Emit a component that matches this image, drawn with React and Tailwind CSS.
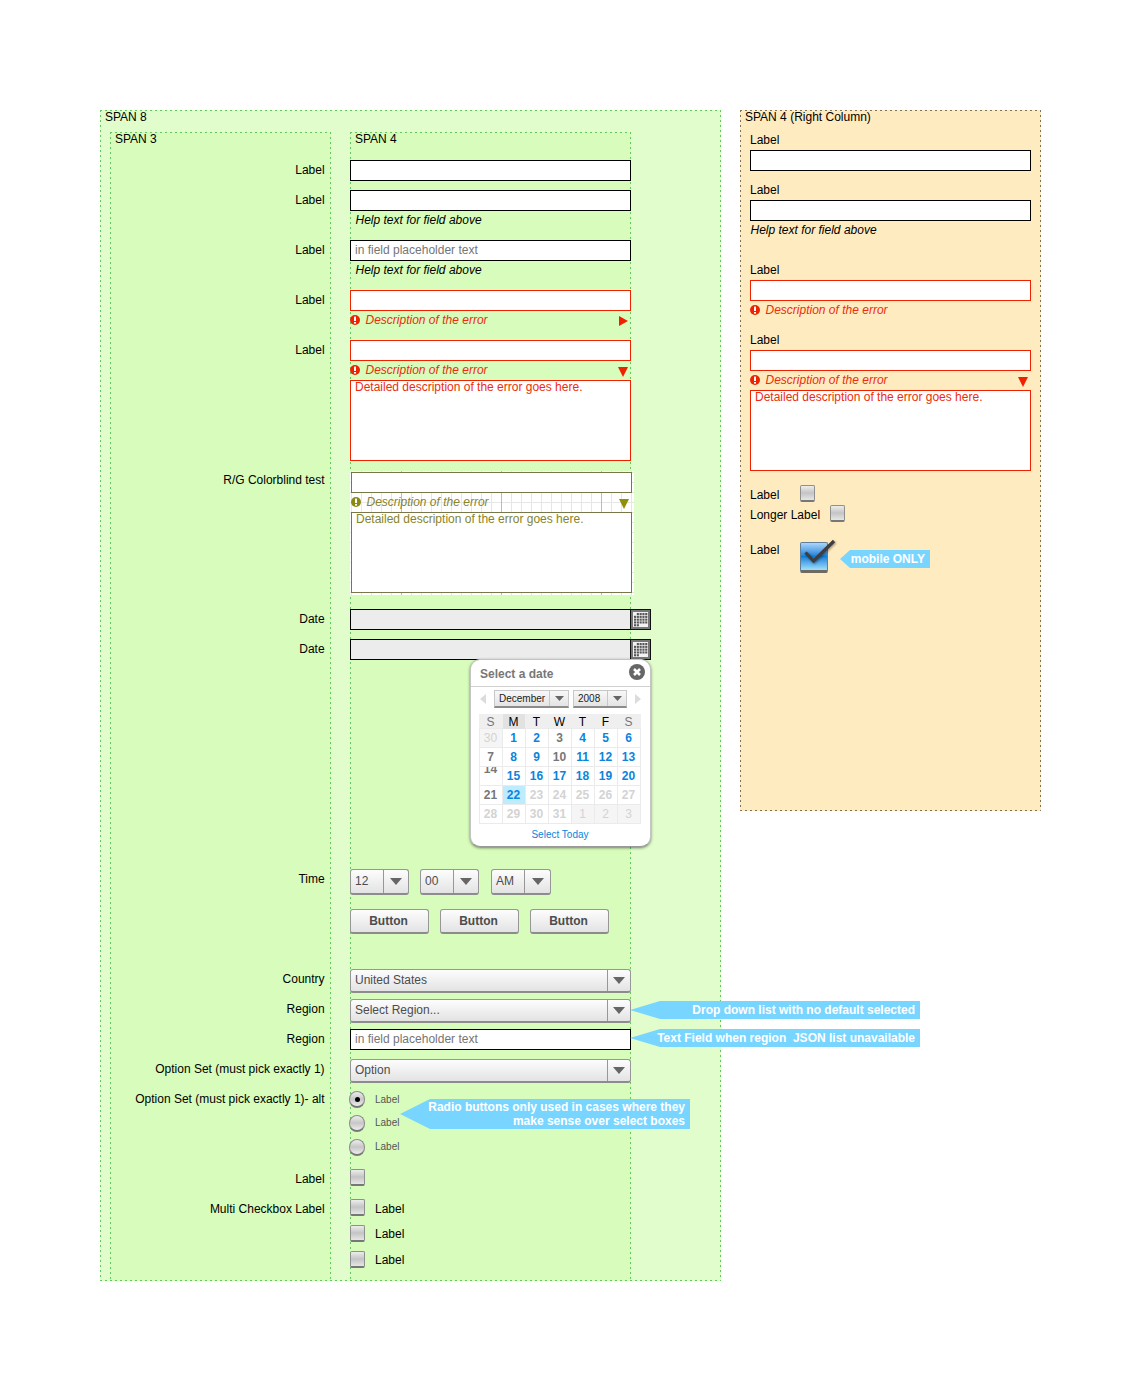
import React from "react";

const GREEN_DASH =
  "[background-image:repeating-linear-gradient(90deg,#63c863_0_2px,transparent_2px_5px),repeating-linear-gradient(90deg,#63c863_0_2px,transparent_2px_5px),repeating-linear-gradient(180deg,#63c863_0_2px,transparent_2px_5px),repeating-linear-gradient(180deg,#63c863_0_2px,transparent_2px_5px)] [background-size:100%_1px,100%_1px,1px_100%,1px_100%] [background-position:0_0,0_100%,0_0,100%_0] bg-no-repeat";
const GRAY_DASH =
  "[background-image:repeating-linear-gradient(90deg,#7d7363_0_2px,transparent_2px_5px),repeating-linear-gradient(90deg,#7d7363_0_2px,transparent_2px_5px),repeating-linear-gradient(180deg,#7d7363_0_2px,transparent_2px_5px),repeating-linear-gradient(180deg,#7d7363_0_2px,transparent_2px_5px)] [background-size:100%_1px,100%_1px,1px_100%,1px_100%] [background-position:0_0,0_100%,0_0,100%_0] bg-no-repeat";

const labels = [
  ["Label", "h-[30px]"],
  ["Label", "h-[50px]"],
  ["Label", "h-[50px]"],
  ["Label", "h-[50px]"],
  ["Label", "h-[130px]"],
  ["R/G Colorblind test", "h-[139px]"],
  ["Date", "h-[30px]"],
  ["Date", "h-[230px]"],
  ["Time", "h-[100px]"],
  ["Country", "h-[30px]"],
  ["Region", "h-[30px]"],
  ["Region", "h-[30px]"],
  ["Option Set (must pick exactly 1)", "h-[30px]"],
  ["Option Set (must pick exactly 1)- alt", "h-[80px]"],
  ["Label", "h-[30px]"],
  ["Multi Checkbox Label", "h-[30px]"],
];

function Field({ color = "border-black", children }) {
  return (
    <div className={`h-[21px] w-[281px] border bg-white pl-1 leading-[18px] text-[#757575] ${color}`}>
      {children}
    </div>
  );
}

function Triangle({ dir = "down", className = "fill-[#ee2200]" }) {
  return (
    <svg width="10" height="10" viewBox="0 0 10 10" className={className}>
      {dir === "down" ? <path d="M0 0H10L5 10Z" /> : <path d="M1 0L10 5L1 10Z" />}
    </svg>
  );
}

function ErrorLine({ arrow, olive }) {
  return (
    <div
      className={`flex h-[20px] w-[281px] items-center pr-[3px] italic ${olive ? "text-[#85852a]" : "text-[#ee2b0c]"}`}
    >
      <svg width="10" height="10" viewBox="0 0 10 10" className={olive ? "fill-[#8b8a10]" : "fill-[#ee2200]"}>
        <circle cx="5" cy="5" r="5" />
        <rect x="4" y="1.6" width="2" height="4.4" fill="white" />
        <rect x="4" y="7" width="2" height="1.6" fill="white" />
      </svg>
      <span className="ml-[5.5px] grow leading-[20px]">Description of the error</span>
      {arrow && (
        <span className={arrow === "down" ? "mt-[4px]" : "mt-[2px]"}>
          <Triangle dir={arrow} className={olive ? "fill-[#8f8f08]" : "fill-[#ee2200]"} />
        </span>
      )}
    </div>
  );
}

function Detail({ className = "border-[#ee2200] text-[#ee2b0c]" }) {
  return (
    <div className={`h-[81px] w-[281px] border bg-white pl-1 leading-[12px] ${className}`}>
      Detailed description of the error goes here.
    </div>
  );
}

function Help({ className }) {
  return <div className={`leading-[20px] italic ${className}`}>Help text for field above</div>;
}

function CalendarIcon() {
  const cells = [];
  for (let r = 0; r < 5; r++)
    for (let c = 0; c < 5; c++) {
      if ((r === 0 && c < 1) || (r === 4 && c > 1)) continue;
      cells.push(<rect key={`${r}-${c}`} x={4 + c * 2.8} y={4 + r * 2.8} width="2.1" height="2.1" />);
    }
  return (
    <svg width="21" height="21" viewBox="0 0 21 21" className="-ml-px">
      <rect width="21" height="21" fill="#111" />
      <rect x="1" y="1" width="19" height="19" fill="#777" />
      <rect x="3" y="3" width="15" height="15" fill="#f2f2f2" />
      <g fill="#555">{cells}</g>
    </svg>
  );
}

function DateField() {
  return (
    <div className="flex w-[301px]">
      <div className="h-[21px] w-[281px] shrink-0 border border-black bg-[#ececec]" />
      <CalendarIcon />
    </div>
  );
}

const BEVEL =
  "border border-b-2 border-[#979797] border-b-[#8c8c8c] bg-linear-to-b from-[#fdfdfd] to-[#e3e3e3] text-[#4c4c4c]";

function Select({ children, className, arrow = "w-[25px]", text = "leading-[20px]" }) {
  return (
    <div className={`flex rounded-[3px] ${BEVEL} ${className}`}>
      <span className={`grow pl-1 ${text}`}>{children}</span>
      <span className={`flex items-center justify-center border-l border-[#979797] ${arrow}`}>
        <svg width="12" height="7" viewBox="0 0 12 7" className="fill-[#666]">
          <path d="M0 0H12L6 7Z" />
        </svg>
      </span>
    </div>
  );
}

function Button() {
  return (
    <div className={`h-[25px] w-[79px] rounded-[3px] pr-[2px] text-center font-bold leading-[22px] ${BEVEL}`}>
      Button
    </div>
  );
}

function Checkbox() {
  return (
    <div className="h-[17px] w-[15px] shrink-0 rounded-[2px] border border-b-2 border-[#8f8f8f] border-b-[#777] bg-linear-to-b from-[#ededed] via-[#c4c4c4] to-[#e6e6e6]" />
  );
}

function Radio({ on }) {
  return (
    <div className="-ml-px flex h-[17px] w-[16px] items-center justify-center rounded-full border border-b-2 border-[#8c8c8c] border-b-[#777] bg-linear-to-b from-[#eee] via-[#c6c6c6] to-[#eee]">
      {on && <div className="h-[5px] w-[5px] rounded-full bg-black" />}
    </div>
  );
}

function Callout({ className, children }) {
  return (
    <div
      className={`absolute z-10 bg-[#78d5ff] pr-[5px] text-right font-bold whitespace-pre text-white ${className}`}
    >
      {children}
    </div>
  );
}

const days = [
  ["30", "out"], ["1"], ["2"], ["3", "gray"], ["4"], ["5"], ["6"],
  ["7", "gray"], ["8"], ["9"], ["10", "gray"], ["11"], ["12"], ["13"],
  ["14", "clip"], ["15"], ["16"], ["17"], ["18"], ["19"], ["20"],
  ["21", "gray"], ["22", "today"], ["23", "off"], ["24", "off"], ["25", "off"], ["26", "off"], ["27", "off"],
  ["28", "off"], ["29", "off"], ["30", "off"], ["31", "off"], ["1", "out"], ["2", "out"], ["3", "out"],
];
const dayStyle = {
  link: "bg-white font-bold text-[#0a84dc]",
  gray: "bg-white font-bold text-[#777]",
  clip: "bg-white font-bold text-[#777]",
  today: "bg-[#bfebff] font-bold text-[#0a84dc]",
  off: "bg-white font-bold text-[#d3d3d3]",
  out: "bg-[#f5f5f5] text-[#d3d3d3]",
};

function MiniSelect({ children, className }) {
  return (
    <div
      className={`flex h-[18px] border border-b-2 border-[#c8c8c8] border-b-[#8c8c8c] bg-linear-to-b from-[#f8f8f8] to-[#e4e4e4] text-[10px] text-[#222] ${className}`}
    >
      <span className="grow pl-1 leading-[15px]">{children}</span>
      <span className="flex w-[19px] items-center justify-center border-l border-[#c8c8c8]">
        <svg width="9" height="5" viewBox="0 0 9 5" className="fill-[#666]">
          <path d="M0 0H9L4.5 5Z" />
        </svg>
      </span>
    </div>
  );
}

function DatePopup() {
  return (
    <div className="absolute top-[20px] left-[120px] z-10 h-[188px] w-[181px] rounded-[10px] border border-[#c4c4c4] border-b-[#999] bg-white shadow-[0_1px_3px_rgba(0,0,0,0.5)]">
      <div className="flex h-[27px] items-start justify-between border-b border-[#d0d0d0] pr-[5px] pl-[9px]">
        <span className="leading-[28px] font-bold text-[#777]">Select a date</span>
        <svg width="16" height="16" viewBox="0 0 16 16" className="mt-[4px]">
          <circle cx="8" cy="8" r="8" fill="#666" />
          <path d="M5 5L11 11M11 5L5 11" stroke="white" strokeWidth="2.6" />
        </svg>
      </div>
      <div className="flex h-[27px] items-center pl-[9px]">
        <svg width="6" height="10" viewBox="0 0 6 10" className="mb-[3px] fill-[#dcdcdc]">
          <path d="M6 0V10L0 5Z" />
        </svg>
        <MiniSelect className="mb-[3px] ml-[8px] w-[75px]">December</MiniSelect>
        <MiniSelect className="mb-[3px] ml-[4px] w-[54px]">2008</MiniSelect>
        <svg width="6" height="10" viewBox="0 0 6 10" className="mb-[3px] ml-[8px] fill-[#dcdcdc]">
          <path d="M0 0V10L6 5Z" />
        </svg>
      </div>
      <div className="ml-[8px] w-[162px] bg-[#ebebeb]">
        <div className="grid h-[14px] grid-cols-7 gap-px bg-[#efefef] px-px text-center leading-[16px]">
          {["S", "M", "T", "W", "T", "F", "S"].map((d, i) => (
            <span
              key={i}
              className={`pr-px ${i === 1 ? "bg-[#e2e2e2] text-black" : i % 6 === 0 ? "text-[#777]" : "text-black"}`}
            >
              {d}
            </span>
          ))}
        </div>
        <div className="grid grid-cols-7 gap-px p-px text-center">
          {days.map(([n, kind = "link"], i) => (
            <span key={i} className={`h-[18px] overflow-hidden pr-px leading-[18px] ${dayStyle[kind]}`}>
              <span className={kind === "clip" ? "-mt-[7px] block" : "block"}>{n}</span>
            </span>
          ))}
        </div>
      </div>
      <div className="pr-px text-center text-[10px] leading-[21px] text-[#0a84dc]">Select Today</div>
    </div>
  );
}

function ColorblindSample() {
  return (
    <div className="h-[124px] w-[284px] bg-white bg-[linear-gradient(90deg,#bbb_1px,transparent_1px),linear-gradient(90deg,#e6e6e6_1px,transparent_1px),linear-gradient(#e6e6e6_1px,transparent_1px)] [background-position:51px_0,1px_0,0_1px] [background-size:100px_100%,10px_100%,100%_10px] pt-px pl-px">
      <Field color="border-[#77774a]" />
      <div className="-mt-px h-[20px]">
        <ErrorLine arrow="down" olive />
      </div>
      <Detail className="border-[#77774a] text-[#85852a]" />
    </div>
  );
}

function MobileCheckbox() {
  return (
    <div className="relative h-[31px] w-[28px] rounded-[2px] border border-b-[3px] border-[#5f7f9c] border-b-[#6f6a60] bg-linear-to-b from-[#a9d6fa] via-[#0c7fd8] to-[#9fe0fb]">
      <svg width="36" height="28" viewBox="0 0 36 28" className="absolute -top-[4px] left-0 drop-shadow-[1px_1px_1px_rgba(0,0,0,0.4)]">
        <path d="M4.5 13.5L12.5 22L33 2" fill="none" stroke="#3e3e40" strokeWidth="3.2" />
      </svg>
    </div>
  );
}

export default function App() {
  return (
    <div className="flex h-[1380px] w-[1140px] gap-[19px] overflow-hidden bg-white pt-[110px] pl-[100px] font-['Liberation_Sans',Arial,sans-serif] text-[12px] leading-[14px] text-black">
      <section className={`h-[1171px] w-[621px] bg-[#e0fdcb] ${GREEN_DASH}`}>
        <h2 className="h-[22px] pl-[5px]">SPAN 8</h2>
        <div className="flex gap-[19px] pl-[10px]">
          <div className={`h-[1149px] w-[221px] bg-[#d8fcbb] ${GREEN_DASH}`}>
            <h3 className="h-[28px] pl-[5px]">SPAN 3</h3>
            <div className="pr-[6.4px] text-right leading-[20px]">
              {labels.map(([text, h], i) => (
                <div key={i} className={h}>
                  {text}
                </div>
              ))}
            </div>
          </div>

          <div className={`h-[1149px] w-[281px] bg-[#d8fcbb] ${GREEN_DASH}`}>
            <h3 className="h-[28px] pl-[5px]">SPAN 4</h3>
            <div className="h-[30px]"><Field /></div>
            <div className="h-[50px]">
              <Field />
              <Help className="-mt-px pl-[5.5px]" />
            </div>
            <div className="h-[50px]">
              <Field>in field placeholder text</Field>
              <Help className="-mt-px pl-[5.5px]" />
            </div>
            <div className="h-[50px]">
              <Field color="border-[#ee2200]" />
              <div className="-mt-px"><ErrorLine arrow="right" /></div>
            </div>
            <div className="h-[131px]">
              <Field color="border-[#ee2200]" />
              <div className="-mt-px"><ErrorLine arrow="down" /></div>
              <Detail />
            </div>
            <div className="h-[138px]"><ColorblindSample /></div>
            <div className="h-[30px]"><DateField /></div>
            <div className="relative h-[230px]">
              <DateField />
              <DatePopup />
            </div>
            <div className="flex h-[40px] w-[290px]">
              <Select className="h-[26px] w-[59px]" text="leading-[22px]">12</Select>
              <Select className="ml-[11px] h-[26px] w-[59px]" text="leading-[22px]">00</Select>
              <Select className="ml-[12px] h-[26px] w-[60px]" text="leading-[22px]" arrow="w-[26px]">AM</Select>
            </div>
            <div className="flex h-[60px] gap-[11px]">
              <Button />
              <Button />
              <Button />
            </div>
            <div className="h-[30px]"><Select className="h-[24px] w-[281px]" arrow="w-[23px]">United States</Select></div>
            <div className="relative h-[30px]">
              <Select className="h-[24px] w-[281px]" arrow="w-[23px]">Select Region...</Select>
              <Callout className="top-[2px] left-[280px] h-[18px] w-[290px] leading-[18px] [clip-path:polygon(0_50%,30px_0,100%_0,100%_100%,30px_100%)]">
                Drop down list with no default selected
              </Callout>
            </div>
            <div className="relative h-[30px]">
              <Field>in field placeholder text</Field>
              <Callout className="top-0 left-[280px] h-[18px] w-[290px] leading-[18px] [clip-path:polygon(0_50%,30px_0,100%_0,100%_100%,30px_100%)]">
                {"Text Field when region  JSON list unavailable"}
              </Callout>
            </div>
            <div className="h-[32px]"><Select className="h-[24px] w-[281px]" arrow="w-[23px]">Option</Select></div>
            <div className="relative h-[78px] text-[10px] text-[#555]">
              <div className="flex h-[24px] gap-[10px]"><Radio on /><span className="leading-[17px]">Label</span></div>
              <div className="flex h-[24px] gap-[10px]"><Radio /><span className="leading-[16px]">Label</span></div>
              <div className="flex h-[24px] gap-[10px]"><Radio /><span className="leading-[16px]">Label</span></div>
              <Callout className="top-[8px] left-[50px] h-[30px] w-[290px] pt-px text-[12px] leading-[14px] [clip-path:polygon(0_50%,30px_0,100%_0,100%_100%,30px_100%)]">
                {"Radio buttons only used in cases where they\nmake sense over select boxes"}
              </Callout>
            </div>
            <div className="h-[30px]"><Checkbox /></div>
            <div className="flex h-[26px] gap-[10px] leading-[20px]"><Checkbox />Label</div>
            <div className="flex h-[26px] gap-[10px] leading-[18px]"><Checkbox />Label</div>
            <div className="flex h-[26px] gap-[10px] leading-[18px]"><Checkbox />Label</div>
          </div>
        </div>
      </section>

      <section className={`h-[701px] w-[301px] bg-[#ffebc0] pr-[10px] ${GRAY_DASH}`}>
        <h2 className="h-[20px] pl-[5px]">SPAN 4 (Right Column)</h2>
        <div className="pl-[10px] leading-[20px]">
          <div className="h-[50px]">
            <div>Label</div>
            <Field />
          </div>
          <div className="h-[80px]">
            <div>Label</div>
            <Field />
            <Help className="-mt-px pl-[0.5px]" />
          </div>
          <div className="h-[70px]">
            <div>Label</div>
            <Field color="border-[#ee2200]" />
            <div className="-mt-px"><ErrorLine /></div>
          </div>
          <div className="h-[155px]">
            <div>Label</div>
            <Field color="border-[#ee2200]" />
            <div className="-mt-px"><ErrorLine arrow="down" /></div>
            <Detail />
          </div>
          <div className="flex h-[20px]"><span className="w-[50px]">Label</span><Checkbox /></div>
          <div className="flex h-[35px]"><span className="w-[80px]">Longer Label</span><Checkbox /></div>
          <div className="relative flex">
            <span className="w-[50px]">Label</span>
            <div className="mt-[2px]"><MobileCheckbox /></div>
            <Callout className="top-[10px] left-[90px] h-[18px] w-[90px] leading-[18px] [clip-path:polygon(0_50%,10px_0,100%_0,100%_100%,10px_100%)]">
              mobile ONLY
            </Callout>
          </div>
        </div>
      </section>
    </div>
  );
}
